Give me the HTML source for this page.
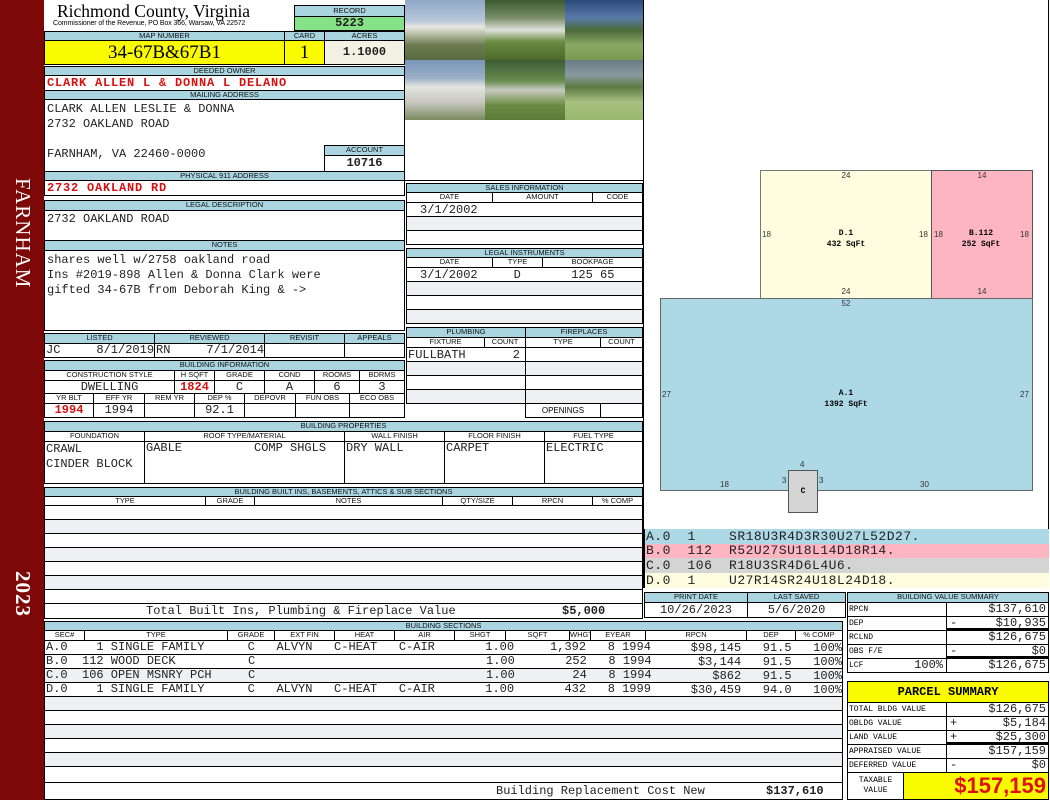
<!DOCTYPE html>
<html><head><meta charset="utf-8"><style>
*{margin:0;padding:0;box-sizing:border-box}
body{width:1050px;height:800px;position:relative;overflow:hidden;background:#fff;font-family:"Liberation Sans",sans-serif}
div{position:absolute}
.h{background:#a9d4e0;border:1px solid #000;font-size:7.5px;text-align:center;color:#111;line-height:8px;white-space:nowrap;overflow:hidden}
.c{border:1px solid #000;background:#fff}
.g{background:#eef0f4}
.m{font-family:"Liberation Mono",monospace;font-size:12px;color:#222;white-space:pre;line-height:13px}
.r{color:#d81010;font-weight:bold}
.s{font-size:8px;text-align:center;color:#333;font-family:"Liberation Sans",sans-serif}
.sb{font-family:"Liberation Mono",monospace;font-size:8px;font-weight:bold;text-align:center;line-height:11px}
</style></head><body>
<div style="left:0;top:0;width:44px;height:800px;background:#7d0808"></div>
<div style="left:10px;top:178px;writing-mode:vertical-rl;color:#fff;font-family:'Liberation Serif',serif;font-size:21px;letter-spacing:1px">FARNHAM</div>
<div style="left:10px;top:571px;writing-mode:vertical-rl;color:#fff;font-family:'Liberation Serif',serif;font-size:21px;letter-spacing:1px;font-weight:bold">2023</div>

<div style="left:57px;top:1px;font-family:'Liberation Serif',serif;font-size:17.5px;color:#000">Richmond County, Virginia</div>
<div style="left:53px;top:20px;font-size:7px;color:#000;letter-spacing:-0.1px">Commissioner of the Revenue, PO Box 366, Warsaw, VA 22572</div>
<div class="h" style="left:294px;top:5px;width:111px;height:12px;line-height:10px">RECORD</div>
<div class="c m" style="left:294px;top:16px;width:111px;height:15px;background:#86e286;text-align:center;font-weight:bold;font-size:12px;line-height:13px">5223</div>

<div class="h" style="left:44px;top:31px;width:241px;height:10px">MAP NUMBER</div>
<div class="h" style="left:284px;top:31px;width:41px;height:10px">CARD</div>
<div class="h" style="left:324px;top:31px;width:81px;height:10px">ACRES</div>
<div class="c" style="left:44px;top:40px;width:241px;height:25px;background:#fbfb00;font-family:'Liberation Serif',serif;font-size:19px;text-align:center;line-height:23px">34-67B&amp;67B1</div>
<div class="c" style="left:284px;top:40px;width:41px;height:25px;background:#fbfb00;font-family:'Liberation Serif',serif;font-size:19px;text-align:center;line-height:23px">1</div>
<div class="c m" style="left:324px;top:40px;width:81px;height:25px;background:#f3f1e3;text-align:center;font-weight:bold;line-height:23px">1.1000</div>

<div class="h" style="left:44px;top:66px;width:361px;height:10px">DEEDED OWNER</div>
<div class="c" style="left:44px;top:75px;width:361px;height:16px"></div>
<div class="m r" style="left:47px;top:77px;letter-spacing:0.8px">CLARK ALLEN L &amp; DONNA L DELANO</div>
<div class="h" style="left:44px;top:90px;width:361px;height:10px">MAILING ADDRESS</div>
<div class="c" style="left:44px;top:99px;width:361px;height:73px"></div>
<div class="m" style="left:47px;top:103px">CLARK ALLEN LESLIE &amp; DONNA</div>
<div class="m" style="left:47px;top:118px">2732 OAKLAND ROAD</div>
<div class="m" style="left:47px;top:148px">FARNHAM, VA 22460-0000</div>
<div class="h" style="left:324px;top:145px;width:81px;height:11px">ACCOUNT</div>
<div class="c m" style="left:324px;top:155px;width:81px;height:17px;text-align:center;font-weight:bold;line-height:15px">10716</div>
<div class="h" style="left:44px;top:171px;width:361px;height:10px">PHYSICAL 911 ADDRESS</div>
<div class="c" style="left:44px;top:180px;width:361px;height:16px"></div>
<div class="m r" style="left:47px;top:182px;letter-spacing:0.8px">2732 OAKLAND RD</div>

<div class="h" style="left:44px;top:200px;width:361px;height:11px">LEGAL DESCRIPTION</div>
<div class="c" style="left:44px;top:210px;width:361px;height:31px"></div>
<div class="m" style="left:47px;top:213px">2732 OAKLAND ROAD</div>
<div class="h" style="left:44px;top:240px;width:361px;height:11px">NOTES</div>
<div class="c" style="left:44px;top:250px;width:361px;height:81px"></div>
<div class="m" style="left:47px;top:253px;line-height:15px">shares well w/2758 oakland road
Ins #2019-898 Allen &amp; Donna Clark were
gifted 34-67B from Deborah King &amp; -&gt;</div>

<div class="h" style="left:44px;top:333px;width:111px;height:11px">LISTED</div>
<div class="h" style="left:154px;top:333px;width:111px;height:11px">REVIEWED</div>
<div class="h" style="left:264px;top:333px;width:81px;height:11px">REVISIT</div>
<div class="h" style="left:344px;top:333px;width:61px;height:11px">APPEALS</div>
<div class="c" style="left:44px;top:343px;width:111px;height:15px"></div>
<div class="c" style="left:154px;top:343px;width:111px;height:15px"></div>
<div class="c" style="left:264px;top:343px;width:81px;height:15px"></div>
<div class="c" style="left:344px;top:343px;width:61px;height:15px"></div>
<div class="m" style="left:46px;top:344px">JC     8/1/2019</div>
<div class="m" style="left:156px;top:344px">RN     7/1/2014</div>

<div class="h" style="left:44px;top:360px;width:361px;height:11px">BUILDING INFORMATION</div>
<div class="h" style="left:44px;top:370px;width:131px;height:11px;background:#fff">CONSTRUCTION STYLE</div>
<div class="h" style="left:174px;top:370px;width:41px;height:11px;background:#fff">H SQFT</div>
<div class="h" style="left:214px;top:370px;width:51px;height:11px;background:#fff">GRADE</div>
<div class="h" style="left:264px;top:370px;width:51px;height:11px;background:#fff">COND</div>
<div class="h" style="left:314px;top:370px;width:46px;height:11px;background:#fff">ROOMS</div>
<div class="h" style="left:359px;top:370px;width:46px;height:11px;background:#fff">BDRMS</div>
<div class="c m" style="left:44px;top:380px;width:131px;height:14px;text-align:center">DWELLING</div>
<div class="c m r" style="left:174px;top:380px;width:41px;height:14px;text-align:center">1824</div>
<div class="c m" style="left:214px;top:380px;width:51px;height:14px;text-align:center">C</div>
<div class="c m" style="left:264px;top:380px;width:51px;height:14px;text-align:center">A</div>
<div class="c m" style="left:314px;top:380px;width:46px;height:14px;text-align:center">6</div>
<div class="c m" style="left:359px;top:380px;width:46px;height:14px;text-align:center">3</div>
<div class="h" style="left:44px;top:393px;width:50px;height:11px;background:#fff">YR BLT</div>
<div class="h" style="left:93px;top:393px;width:52px;height:11px;background:#fff">EFF YR</div>
<div class="h" style="left:144px;top:393px;width:51px;height:11px;background:#fff">REM YR</div>
<div class="h" style="left:194px;top:393px;width:51px;height:11px;background:#fff">DEP %</div>
<div class="h" style="left:244px;top:393px;width:52px;height:11px;background:#fff">DEPOVR</div>
<div class="h" style="left:295px;top:393px;width:55px;height:11px;background:#fff">FUN OBS</div>
<div class="h" style="left:349px;top:393px;width:56px;height:11px;background:#fff">ECO OBS</div>
<div class="c m r" style="left:44px;top:403px;width:50px;height:15px;text-align:center">1994</div>
<div class="c m" style="left:93px;top:403px;width:52px;height:15px;text-align:center">1994</div>
<div class="c" style="left:144px;top:403px;width:51px;height:15px"></div>
<div class="c m" style="left:194px;top:403px;width:51px;height:15px;text-align:center">92.1</div>
<div class="c" style="left:244px;top:403px;width:52px;height:15px"></div>
<div class="c" style="left:295px;top:403px;width:55px;height:15px"></div>
<div class="c" style="left:349px;top:403px;width:56px;height:15px"></div>

<div style="left:405px;top:0;width:80px;height:60px;background:linear-gradient(#8fa9c8 0,#b8c8d8 35%,#e8e8e0 45%,#6c7c50 75%,#586a40)"></div>
<div style="left:485px;top:0;width:80px;height:60px;background:linear-gradient(#3a5a30 0,#7a8f6a 30%,#dfe2dc 50%,#6a8a40 70%,#4c6a2c)"></div>
<div style="left:565px;top:0;width:79px;height:60px;background:linear-gradient(#2a4a7a 0,#5a7aa8 30%,#4a6a3a 50%,#8aa864 75%,#7a9a50)"></div>
<div style="left:405px;top:60px;width:80px;height:60px;background:linear-gradient(#7a96b8 0,#9ab0c6 30%,#e4e4e0 45%,#c8c8c0 70%,#7a8a60)"></div>
<div style="left:485px;top:60px;width:80px;height:60px;background:linear-gradient(#3c5c34 0,#6a8c50 35%,#c8cac0 50%,#6c8c44 75%,#5a7a38)"></div>
<div style="left:565px;top:60px;width:79px;height:60px;background:linear-gradient(#6a7a84 0,#8a9aa0 25%,#5c7a44 45%,#a8c080 70%,#9ab870)"></div>

<div class="c" style="left:405px;top:120px;width:240px;height:61px;border-top:none;border-left:none"></div>
<div class="h" style="left:406px;top:183px;width:237px;height:10px">SALES INFORMATION</div>
<div class="h" style="left:406px;top:192px;width:87px;height:11px;background:#fff">DATE</div>
<div class="h" style="left:492px;top:192px;width:101px;height:11px;background:#fff">AMOUNT</div>
<div class="h" style="left:592px;top:192px;width:51px;height:11px;background:#fff">CODE</div>
<div class="c" style="left:406px;top:202px;width:237px;height:15px"></div>
<div class="c g" style="left:406px;top:216px;width:237px;height:15px"></div>
<div class="c" style="left:406px;top:230px;width:237px;height:15px"></div>
<div class="m" style="left:420px;top:204px">3/1/2002</div>
<div class="h" style="left:406px;top:248px;width:237px;height:10px">LEGAL INSTRUMENTS</div>
<div class="h" style="left:406px;top:257px;width:87px;height:11px;background:#fff">DATE</div>
<div class="h" style="left:492px;top:257px;width:51px;height:11px;background:#fff">TYPE</div>
<div class="h" style="left:542px;top:257px;width:101px;height:11px;background:#fff">BOOKPAGE</div>
<div class="c" style="left:406px;top:267px;width:237px;height:15px"></div>
<div class="c g" style="left:406px;top:281px;width:237px;height:15px"></div>
<div class="c" style="left:406px;top:295px;width:237px;height:15px"></div>
<div class="c g" style="left:406px;top:309px;width:237px;height:15px"></div>
<div class="m" style="left:420px;top:269px">3/1/2002     D       125 65</div>

<div class="h" style="left:406px;top:327px;width:120px;height:11px">PLUMBING</div>
<div class="h" style="left:525px;top:327px;width:118px;height:11px">FIREPLACES</div>
<div class="h" style="left:406px;top:337px;width:79px;height:11px;background:#fff">FIXTURE</div>
<div class="h" style="left:484px;top:337px;width:42px;height:11px;background:#fff">COUNT</div>
<div class="h" style="left:525px;top:337px;width:76px;height:11px;background:#fff">TYPE</div>
<div class="h" style="left:600px;top:337px;width:43px;height:11px;background:#fff">COUNT</div>
<div class="c" style="left:406px;top:347px;width:120px;height:15px"></div>
<div class="c g" style="left:406px;top:361px;width:120px;height:15px"></div>
<div class="c" style="left:406px;top:375px;width:120px;height:15px"></div>
<div class="c g" style="left:406px;top:389px;width:120px;height:15px"></div>
<div class="c" style="left:525px;top:347px;width:118px;height:15px"></div>
<div class="c g" style="left:525px;top:361px;width:118px;height:15px"></div>
<div class="c" style="left:525px;top:375px;width:118px;height:15px"></div>
<div class="c g" style="left:525px;top:389px;width:118px;height:15px"></div>
<div class="c" style="left:525px;top:403px;width:76px;height:15px;font-size:8px;text-align:center;line-height:13px">OPENINGS</div>
<div class="c" style="left:600px;top:403px;width:43px;height:15px"></div>
<div class="m" style="left:408px;top:349px">FULLBATH</div>
<div class="m" style="left:480px;top:349px;width:40px;text-align:right">2</div>

<div class="h" style="left:44px;top:421px;width:599px;height:11px">BUILDING PROPERTIES</div>
<div class="h" style="left:44px;top:431px;width:101px;height:11px;background:#fff">FOUNDATION</div>
<div class="h" style="left:144px;top:431px;width:201px;height:11px;background:#fff">ROOF TYPE/MATERIAL</div>
<div class="h" style="left:344px;top:431px;width:101px;height:11px;background:#fff">WALL FINISH</div>
<div class="h" style="left:444px;top:431px;width:101px;height:11px;background:#fff">FLOOR FINISH</div>
<div class="h" style="left:544px;top:431px;width:99px;height:11px;background:#fff">FUEL TYPE</div>
<div class="c" style="left:44px;top:441px;width:101px;height:43px"></div>
<div class="c" style="left:144px;top:441px;width:201px;height:43px"></div>
<div class="c" style="left:344px;top:441px;width:101px;height:43px"></div>
<div class="c" style="left:444px;top:441px;width:101px;height:43px"></div>
<div class="c" style="left:544px;top:441px;width:99px;height:43px"></div>
<div class="m" style="left:46px;top:442px;line-height:15px">CRAWL
CINDER BLOCK</div>
<div class="m" style="left:146px;top:442px">GABLE          COMP SHGLS</div>
<div class="m" style="left:346px;top:442px">DRY WALL</div>
<div class="m" style="left:446px;top:442px">CARPET</div>
<div class="m" style="left:546px;top:442px">ELECTRIC</div>

<div class="h" style="left:44px;top:487px;width:599px;height:10px">BUILDING BUILT INS, BASEMENTS, ATTICS &amp; SUB SECTIONS</div>
<div class="h" style="left:44px;top:496px;width:162px;height:10px;background:#fff">TYPE</div>
<div class="h" style="left:205px;top:496px;width:50px;height:10px;background:#fff">GRADE</div>
<div class="h" style="left:254px;top:496px;width:189px;height:10px;background:#fff">NOTES</div>
<div class="h" style="left:442px;top:496px;width:71px;height:10px;background:#fff">QTY/SIZE</div>
<div class="h" style="left:512px;top:496px;width:81px;height:10px;background:#fff">RPCN</div>
<div class="h" style="left:592px;top:496px;width:51px;height:10px;background:#fff">% COMP</div>
<div class="c" style="left:44px;top:505px;width:599px;height:15px"></div>
<div class="c g" style="left:44px;top:519px;width:599px;height:15px"></div>
<div class="c" style="left:44px;top:533px;width:599px;height:15px"></div>
<div class="c g" style="left:44px;top:547px;width:599px;height:15px"></div>
<div class="c" style="left:44px;top:561px;width:599px;height:15px"></div>
<div class="c g" style="left:44px;top:575px;width:599px;height:15px"></div>
<div class="c" style="left:44px;top:589px;width:599px;height:15px"></div>
<div class="c" style="left:44px;top:603px;width:599px;height:16px"></div>
<div class="m" style="left:146px;top:605px">Total Built Ins, Plumbing &amp; Fireplace Value</div>
<div class="m" style="left:562px;top:605px;font-weight:bold">$5,000</div>

<div class="h" style="left:44px;top:621px;width:799px;height:10px">BUILDING SECTIONS</div>
<div class="h" style="left:44px;top:630px;width:41px;height:11px;background:#fff">SEC#</div>
<div class="h" style="left:84px;top:630px;width:144px;height:11px;background:#fff">TYPE</div>
<div class="h" style="left:227px;top:630px;width:48px;height:11px;background:#fff">GRADE</div>
<div class="h" style="left:274px;top:630px;width:61px;height:11px;background:#fff">EXT FIN</div>
<div class="h" style="left:334px;top:630px;width:61px;height:11px;background:#fff">HEAT</div>
<div class="h" style="left:394px;top:630px;width:61px;height:11px;background:#fff">AIR</div>
<div class="h" style="left:454px;top:630px;width:52px;height:11px;background:#fff">SHGT</div>
<div class="h" style="left:505px;top:630px;width:65px;height:11px;background:#fff">SQFT</div>
<div class="h" style="left:569px;top:630px;width:22px;height:11px;background:#fff">WHGT</div>
<div class="h" style="left:590px;top:630px;width:56px;height:11px;background:#fff">EYEAR</div>
<div class="h" style="left:645px;top:630px;width:102px;height:11px;background:#fff">RPCN</div>
<div class="h" style="left:746px;top:630px;width:50px;height:11px;background:#fff">DEP</div>
<div class="h" style="left:795px;top:630px;width:48px;height:11px;background:#fff">% COMP</div>
<div class="c" style="left:44px;top:640px;width:799px;height:15px"></div>
<div class="c" style="left:44px;top:654px;width:799px;height:15px"></div>
<div class="c g" style="left:44px;top:668px;width:799px;height:15px"></div>
<div class="c" style="left:44px;top:682px;width:799px;height:15px"></div>
<div class="c g" style="left:44px;top:696px;width:799px;height:15px"></div>
<div class="c" style="left:44px;top:710px;width:799px;height:15px"></div>
<div class="c g" style="left:44px;top:724px;width:799px;height:15px"></div>
<div class="c" style="left:44px;top:738px;width:799px;height:15px"></div>
<div class="c g" style="left:44px;top:752px;width:799px;height:15px"></div>
<div class="c" style="left:44px;top:766px;width:799px;height:17px"></div>
<div class="c" style="left:44px;top:782px;width:799px;height:18px"></div>
<div class="m" style="left:46px;top:641px">A.0    1 SINGLE FAMILY      C   ALVYN   C-HEAT   C-AIR       1.00     1,392   8 1994</div>
<div class="m" style="left:46px;top:655px">B.0  112 WOOD DECK</div>
<div class="m" style="left:46px;top:669px">C.0  106 OPEN MSNRY PCH</div>
<div class="m" style="left:46px;top:683px">D.0    1 SINGLE FAMILY      C   ALVYN   C-HEAT   C-AIR       1.00       432   8 1999</div>
<div class="m" style="left:248px;top:655px">C</div>
<div class="m" style="left:248px;top:669px">C</div>
<div class="m" style="left:486px;top:655px">1.00       252   8 1994</div>
<div class="m" style="left:486px;top:669px">1.00        24   8 1994</div>
<div class="m" style="left:652px;top:641px;line-height:14px;text-align:right;width:190px">$98,145   91.5   100%
$3,144   91.5   100%
$862   91.5   100%
$30,459   94.0   100%</div>
<div class="m" style="left:496px;top:785px">Building Replacement Cost New</div>
<div class="m" style="left:766px;top:785px;font-weight:bold">$137,610</div>

<div class="c" style="left:643px;top:0;width:406px;height:530px;border-top:none"></div>
<div style="left:760px;top:170px;width:172px;height:129px;background:#fefde0;border:1.5px solid #777"></div>
<div style="left:931px;top:170px;width:102px;height:129px;background:#fdb5c2;border:1.5px solid #555"></div>
<div style="left:660px;top:298px;width:373px;height:193px;background:#add8e6;border:1.5px solid #666"></div>
<div style="left:788px;top:470px;width:30px;height:43px;background:#d4d4d4;border:1.5px solid #555"></div>
<div class="s" style="left:836px;top:171px;width:20px">24</div>
<div class="s" style="left:836px;top:287px;width:20px">24</div>
<div class="s" style="left:972px;top:171px;width:20px">14</div>
<div class="s" style="left:972px;top:287px;width:20px">14</div>
<div class="s" style="left:836px;top:299px;width:20px">52</div>
<div class="s" style="left:762px;top:230px">18</div>
<div class="s" style="left:919px;top:230px">18</div>
<div class="s" style="left:934px;top:230px">18</div>
<div class="s" style="left:1020px;top:230px">18</div>
<div class="s" style="left:662px;top:390px">27</div>
<div class="s" style="left:1020px;top:390px">27</div>
<div class="s" style="left:720px;top:480px">18</div>
<div class="s" style="left:920px;top:480px">30</div>
<div class="s" style="left:800px;top:460px">4</div>
<div class="s" style="left:782px;top:476px">3</div>
<div class="s" style="left:819px;top:476px">3</div>
<div class="sb" style="left:806px;top:228px;width:80px">D.1<br>432 SqFt</div>
<div class="sb" style="left:941px;top:228px;width:80px">B.112<br>252 SqFt</div>
<div class="sb" style="left:806px;top:388px;width:80px">A.1<br>1392 SqFt</div>
<div class="sb" style="left:793px;top:486px;width:20px">C</div>

<div class="m" style="left:644px;top:529px;width:405px;height:15px;background:#add8e6;font-size:13px;line-height:15px;padding-left:2px;letter-spacing:0.5px">A.0  1    SR18U3R4D3R30U27L52D27.</div>
<div class="m" style="left:644px;top:544px;width:405px;height:14px;background:#fdb5c2;font-size:13px;line-height:14px;padding-left:2px;letter-spacing:0.5px">B.0  112  R52U27SU18L14D18R14.</div>
<div class="m" style="left:644px;top:558px;width:405px;height:15px;background:#d4d4d4;font-size:13px;line-height:15px;padding-left:2px;letter-spacing:0.5px">C.0  106  R18U3SR4D6L4U6.</div>
<div class="m" style="left:644px;top:573px;width:405px;height:15px;background:#fefde0;font-size:13px;line-height:15px;padding-left:2px;letter-spacing:0.5px">D.0  1    U27R14SR24U18L24D18.</div>
<div style="left:643px;top:529px;width:2px;height:59px;background:#000"></div>

<div class="h" style="left:644px;top:592px;width:104px;height:11px">PRINT DATE</div>
<div class="h" style="left:747px;top:592px;width:99px;height:11px">LAST SAVED</div>
<div class="c m" style="left:644px;top:602px;width:104px;height:16px;text-align:center;line-height:14px">10/26/2023</div>
<div class="c m" style="left:747px;top:602px;width:99px;height:16px;text-align:center;line-height:14px">5/6/2020</div>

<div class="h" style="left:847px;top:592px;width:202px;height:11px">BUILDING VALUE SUMMARY</div>
<div class="c" style="left:847px;top:602px;width:100px;height:15px;font-family:'Liberation Mono',monospace;font-size:8px;line-height:13px;padding-left:1px">RPCN</div>
<div class="c m" style="left:946px;top:602px;width:103px;height:15px;text-align:right;padding-right:2px">$137,610</div>
<div class="c" style="left:847px;top:616px;width:100px;height:15px;font-family:'Liberation Mono',monospace;font-size:8px;line-height:13px;padding-left:1px">DEP</div>
<div class="c m" style="left:946px;top:616px;width:103px;height:15px;text-align:right;padding-right:2px;border-bottom:3px solid #000"><span style="float:left;padding-left:3px">-</span>$10,935</div>
<div class="c" style="left:847px;top:630px;width:100px;height:15px;font-family:'Liberation Mono',monospace;font-size:8px;line-height:13px;padding-left:1px">RCLND</div>
<div class="c m" style="left:946px;top:630px;width:103px;height:15px;text-align:right;padding-right:2px">$126,675</div>
<div class="c" style="left:847px;top:644px;width:100px;height:15px;font-family:'Liberation Mono',monospace;font-size:8px;line-height:13px;padding-left:1px">OBS F/E</div>
<div class="c m" style="left:946px;top:644px;width:103px;height:15px;text-align:right;padding-right:2px;border-bottom:3px solid #000"><span style="float:left;padding-left:3px">-</span>$0</div>
<div class="c" style="left:847px;top:658px;width:100px;height:15px;font-family:'Liberation Mono',monospace;font-size:8px;line-height:13px;padding-left:1px">LCF<span class="m" style="position:absolute;right:3px;top:0">100%</span></div>
<div class="c m" style="left:946px;top:658px;width:103px;height:15px;text-align:right;padding-right:2px">$126,675</div>

<div class="c" style="left:847px;top:681px;width:202px;height:22px;background:#fbfb00;font-family:'Liberation Mono',monospace;font-weight:bold;font-size:12px;text-align:center;line-height:20px">PARCEL SUMMARY</div>
<div class="c" style="left:847px;top:702px;width:100px;height:15px;font-family:'Liberation Mono',monospace;font-size:8px;line-height:13px;padding-left:1px">TOTAL BLDG VALUE</div>
<div class="c m" style="left:946px;top:702px;width:103px;height:15px;text-align:right;padding-right:2px">$126,675</div>
<div class="c" style="left:847px;top:716px;width:100px;height:15px;font-family:'Liberation Mono',monospace;font-size:8px;line-height:13px;padding-left:1px">OBLDG VALUE</div>
<div class="c m" style="left:946px;top:716px;width:103px;height:15px;text-align:right;padding-right:2px"><span style="float:left;padding-left:3px">+</span>$5,184</div>
<div class="c" style="left:847px;top:730px;width:100px;height:15px;font-family:'Liberation Mono',monospace;font-size:8px;line-height:13px;padding-left:1px">LAND VALUE</div>
<div class="c m" style="left:946px;top:730px;width:103px;height:15px;text-align:right;padding-right:2px;border-bottom:3px solid #000"><span style="float:left;padding-left:3px">+</span>$25,300</div>
<div class="c" style="left:847px;top:744px;width:100px;height:15px;font-family:'Liberation Mono',monospace;font-size:8px;line-height:13px;padding-left:1px">APPRAISED VALUE</div>
<div class="c m" style="left:946px;top:744px;width:103px;height:15px;text-align:right;padding-right:2px">$157,159</div>
<div class="c" style="left:847px;top:758px;width:100px;height:15px;font-family:'Liberation Mono',monospace;font-size:8px;line-height:13px;padding-left:1px">DEFERRED VALUE</div>
<div class="c m" style="left:946px;top:758px;width:103px;height:15px;text-align:right;padding-right:2px"><span style="float:left;padding-left:3px">-</span>$0</div>
<div class="c" style="left:847px;top:772px;width:57px;height:28px;font-family:'Liberation Mono',monospace;font-size:8px;line-height:10px;text-align:center;padding-top:3px">TAXABLE<br>VALUE</div>
<div class="c" style="left:903px;top:772px;width:146px;height:28px;background:#fbfb00;color:#e01010;font-weight:bold;font-size:22px;text-align:right;padding-right:2px;line-height:26px">$157,159</div>
</body></html>
